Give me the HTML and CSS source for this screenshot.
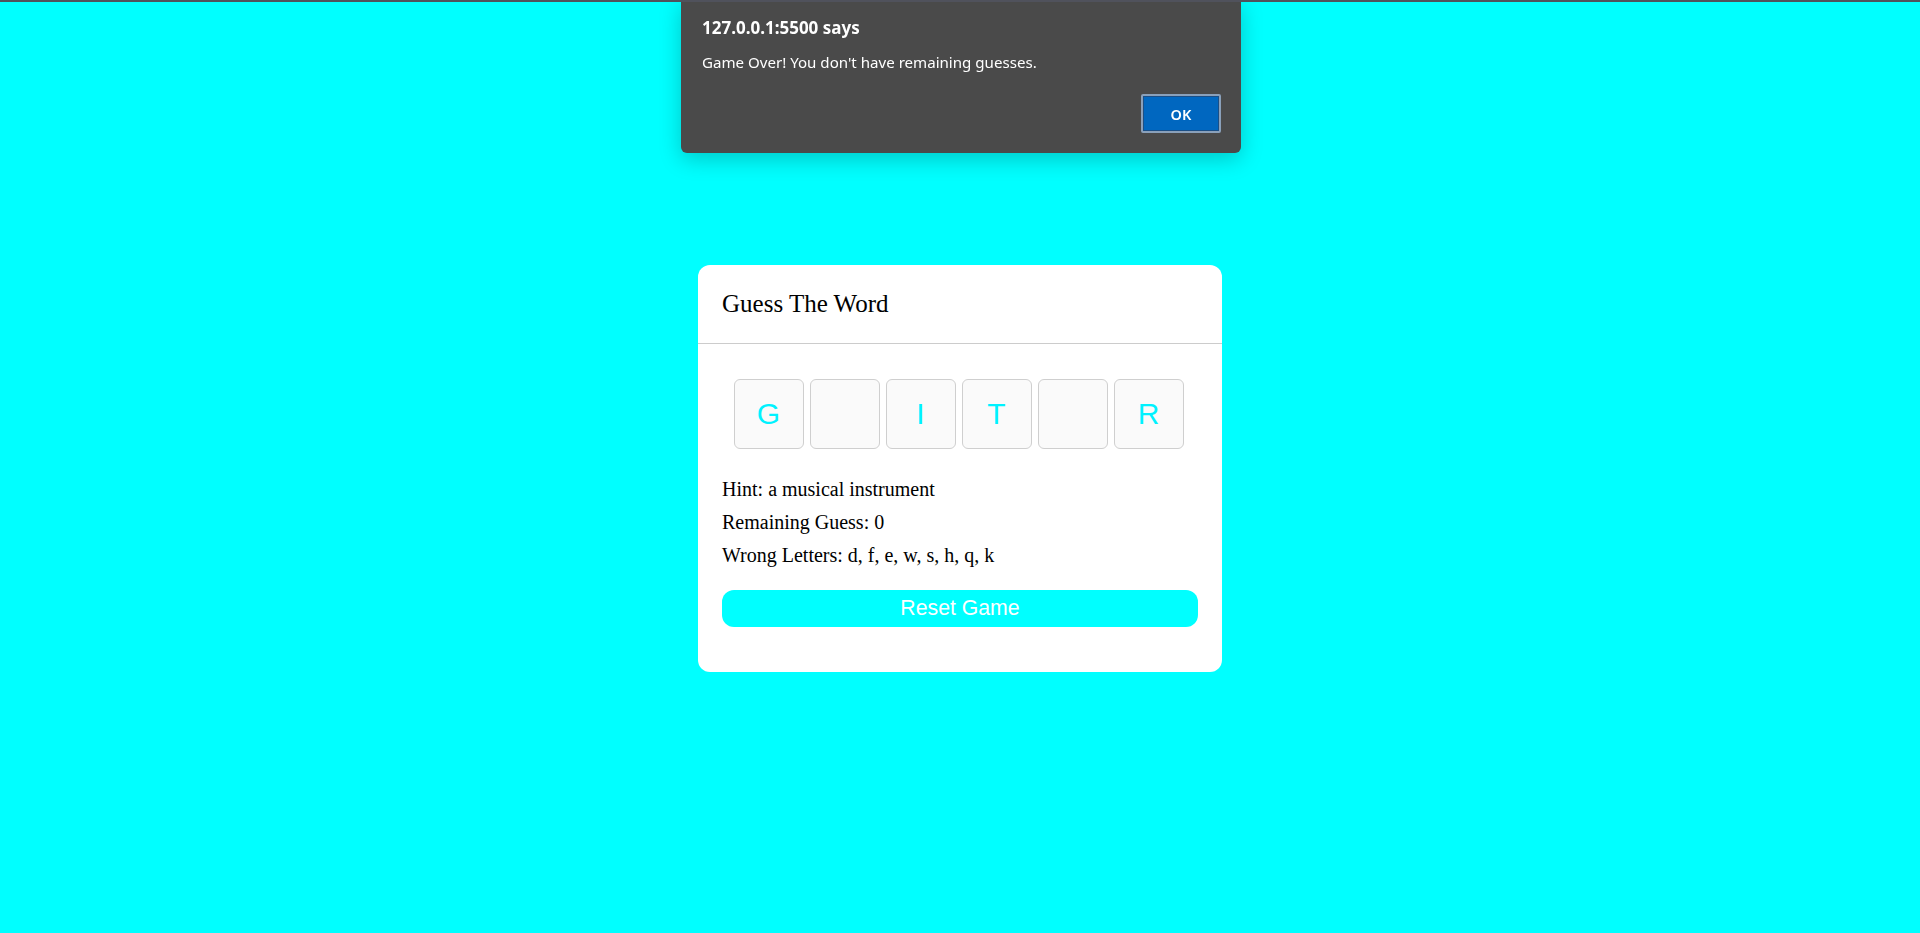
FILE: index.html
```html
<!DOCTYPE html>
<html lang="en">
<head>
<meta charset="utf-8">
<title>Guess The Word</title>
<link rel="stylesheet" href="styles.css">
</head>
<body>
<div class="topline"></div>
<div class="wrapper">
  <h1 class="title">Guess The Word</h1>
  <div class="content">
    <div class="inputs">
      <div class="tile">G</div>
      <div class="tile"></div>
      <div class="tile">I</div>
      <div class="tile">T</div>
      <div class="tile"></div>
      <div class="tile">R</div>
    </div>
    <div class="details">
      <p class="line">Hint: <span>a musical instrument</span></p>
      <p class="line">Remaining Guess: <span>0</span></p>
      <p class="line">Wrong Letters: <span>d, f, e, w, s, h, q, k</span></p>
    </div>
    <button class="reset-btn">Reset Game</button>
  </div>
</div>
<div class="alert">
  <div class="alert-title">127.0.0.1:5500 says</div>
  <div class="alert-msg">Game Over! You don't have remaining guesses.</div>
  <div class="alert-actions">
    <button class="alert-ok">OK</button>
  </div>
</div>
</body>
</html>
```

FILE: styles.css
```css
* {
  box-sizing: border-box;
}
html, body {
  margin: 0;
  padding: 0;
}
body {
  min-height: 100vh;
  padding-top: 3px;
  display: flex;
  align-items: center;
  justify-content: center;
  background: #00ffff;
  font-family: "Liberation Serif", "Times New Roman", serif;
}
.topline {
  position: fixed;
  top: 0;
  left: 0;
  right: 0;
  height: 2px;
  background: #50525c;
  z-index: 5;
}
.wrapper {
  width: 524px;
  background: #fff;
  border-radius: 12px;
}
.title {
  margin: 0;
  font-size: 25px;
  font-weight: 400;
  line-height: 28px;
  color: #000;
  padding: 25px 25px 25px 24px;
  border-bottom: 1px solid #cccccc;
}
.content {
  padding: 35px 24px 45px 24px;
}
.inputs {
  display: flex;
  justify-content: center;
  gap: 6px;
  padding-right: 3px;
}
.tile {
  width: 70px;
  height: 70px;
  border: 1px solid #cfcfcf;
  border-radius: 6px;
  background: #fafafa;
  display: flex;
  align-items: center;
  justify-content: center;
  font-family: "Liberation Sans", Arial, sans-serif;
  font-size: 30px;
  color: #00f2ff;
}
.details {
  display: flow-root;
  margin: 29.5px 0 12.5px;
}
.line {
  margin: 0 0 10px;
  font-size: 20px;
  line-height: 23px;
  color: #000;
}
.reset-btn {
  display: block;
  width: 100%;
  height: 37px;
  border: none;
  border-radius: 12px;
  background: #00ffff;
  color: #fff;
  font-family: "Liberation Sans", Arial, sans-serif;
  font-size: 21.25px;
  padding: 0;
}
.alert {
  position: fixed;
  top: 0;
  left: 681px;
  width: 560px;
  height: 153px;
  background: #4a4a4a;
  border-radius: 0 0 6px 6px;
  box-shadow: 0 6px 22px rgba(0, 0, 0, 0.22);
  padding: 17px 20px 20px 21px;
  font-family: "Noto Sans", "Open Sans", sans-serif;
  color: #fff;
  display: flex;
  flex-direction: column;
}
.alert-title {
  font-size: 17px;
  font-weight: 700;
  line-height: 22px;
}
.alert-msg {
  margin-top: 12px;
  font-size: 15.1px;
  line-height: 22px;
}
.alert-actions {
  margin-top: auto;
  display: flex;
  justify-content: flex-end;
}
.alert-ok {
  width: 80px;
  height: 39px;
  background: #0067c0;
  border: 2px solid #8aa0ba;
  box-shadow: inset 0 0 0 1px #1b4f86;
  border-radius: 2px;
  color: #fff;
  font-family: "Noto Sans", "Open Sans", sans-serif;
  font-size: 14.5px;
  font-weight: 600;
  padding: 0;
}
```
